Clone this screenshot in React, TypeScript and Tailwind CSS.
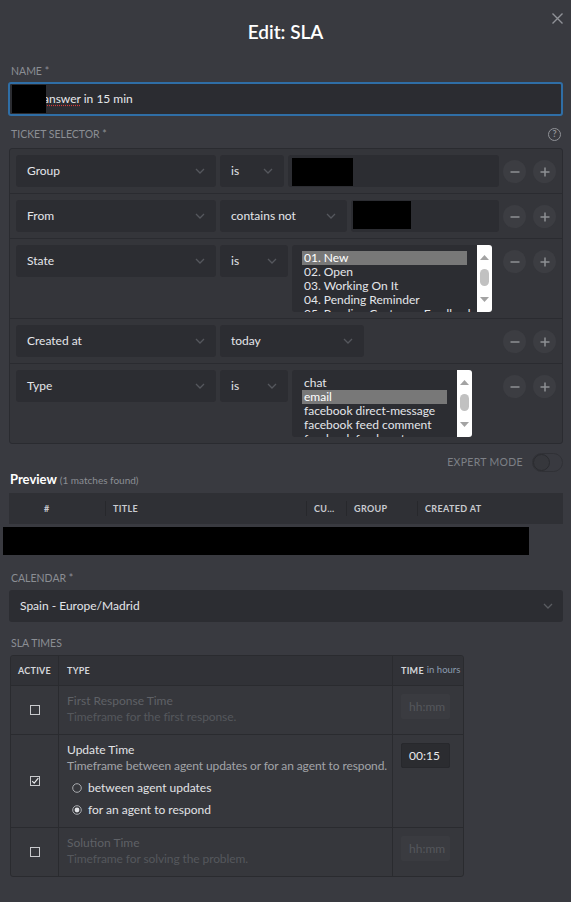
import React from "react";

const Chevron = ({ className = "" }: { className?: string }) => (
  <svg width="10" height="6" viewBox="0 0 10 6" className={className}>
    <path d="M1 1l4 4 4-4" fill="none" stroke="currentColor" strokeWidth="1.3" />
  </svg>
);

function Select({ label, w }: { label: string; w: string }) {
  return (
    <div
      className={`${w} h-8 shrink-0 rounded-[3px] bg-[#2c2d32] flex items-center justify-between px-[11px] text-[12px] text-[#e4e6ea]`}
    >
      <span>{label}</span>
      <Chevron className="text-[#55575d]" />
    </div>
  );
}

function RoundButton({ plus }: { plus?: boolean }) {
  return (
    <div className="w-[23px] h-[23px] rounded-full bg-[#3c3d42] flex items-center justify-center">
      <svg width="10" height="10" viewBox="0 0 10 10">
        <path d="M0.5 5h9" stroke="#8e9095" strokeWidth="1.5" />
        {plus && <path d="M5 0.5v9" stroke="#8e9095" strokeWidth="1.5" />}
      </svg>
    </div>
  );
}

function RowButtons() {
  return (
    <div className="ml-auto flex gap-[7px] pt-[5px]">
      <RoundButton />
      <RoundButton plus />
    </div>
  );
}

function Scrollbar() {
  return (
    <div className="w-[15px] h-full bg-white shrink-0 flex flex-col items-center pt-[10px]">
      <svg width="9" height="5" viewBox="0 0 9 5">
        <path d="M0 5L4.5 0L9 5z" fill="#a3a3a3" />
      </svg>
      <div className="mt-[9px] w-[9px] h-[17px] rounded-full bg-[#c1c1c1]" />
      <svg width="9" height="5" viewBox="0 0 9 5" className="mt-[11px]">
        <path d="M0 0L4.5 5L9 0z" fill="#a3a3a3" />
      </svg>
    </div>
  );
}

function ListBox({ items, selected, w }: { items: string[]; selected: string; w: string }) {
  return (
    <div className={`${w} h-[67px] shrink-0 bg-[#2c2d32] rounded-[3px] flex overflow-hidden`}>
      <div className="flex-1 px-[10px] pt-[6px] overflow-hidden">
        {items.map((item) => (
          <div
            key={item}
            className={`h-[14px] leading-[14px] text-[12px] px-[2px] whitespace-nowrap ${
              item === selected ? "bg-[#787878] text-white" : "text-[#e4e6ea]"
            }`}
          >
            {item}
          </div>
        ))}
      </div>
      <Scrollbar />
    </div>
  );
}

function SelectorRow({ children, last }: { children: React.ReactNode; last?: boolean }) {
  return (
    <div className={`flex items-start gap-[4px] px-[6px] py-[6px] ${last ? "" : "border-b border-[#2a2b30]"}`}>
      {children}
      <RowButtons />
    </div>
  );
}

function Label({ children }: { children: React.ReactNode }) {
  return (
    <div className="text-[10.5px] leading-[14px] uppercase text-[#8b8e94] pl-[3px]">
      {children}
    </div>
  );
}

function CheckBox({ checked }: { checked?: boolean }) {
  return (
    <svg width="10" height="10" viewBox="0 0 10 10">
      <rect x="0.5" y="0.5" width="9" height="9" fill="none" stroke="#c9cacd" />
      {checked && <path d="M2.2 5.2l2 2L8.3 2.2" fill="none" stroke="#e8e9eb" strokeWidth="1.2" />}
    </svg>
  );
}

function Radio({ on, label }: { on?: boolean; label: string }) {
  return (
    <div className="h-[22px] flex items-center gap-[6px] pl-[5px]">
      <svg width="10" height="10" viewBox="0 0 10 10">
        <circle cx="5" cy="5" r="4.3" fill="none" stroke="#a9abaf" />
        {on && <circle cx="5" cy="5" r="2.4" fill="#e2e3e6" />}
      </svg>
      <span className="text-[12px] text-[#e2e3e6]">{label}</span>
    </div>
  );
}

function TimeInput({ value }: { value?: string }) {
  return value ? (
    <div className="w-[49px] h-[25px] rounded-[2px] bg-[#2b2c30] border border-[#27282c] text-[12px] text-[#e8e9eb] pl-[7px] flex items-center">
      {value}
    </div>
  ) : (
    <div className="w-[49px] h-[25px] rounded-[2px] bg-[#3a3b40] text-[12px] text-[#55575c] pl-[8px] flex items-center">
      hh:mm
    </div>
  );
}

function SlaRow({
  title,
  desc,
  active,
  value,
  children,
  last,
}: {
  title: string;
  desc: string;
  active?: boolean;
  value?: string;
  children?: React.ReactNode;
  last?: boolean;
}) {
  return (
    <div className={`flex ${last ? "" : "border-b border-[#2a2b2f]"}`}>
      <div className="w-[48px] shrink-0 flex items-center justify-center border-r border-[#2a2b2f]">
        <CheckBox checked={active} />
      </div>
      <div className={`flex-1 min-w-0 pl-[8px] pt-[8px] ${children ? "pb-[6px]" : "pb-[9px]"}`}>
        <div className={`text-[12px] leading-[14px] ${active ? "text-[#e2e3e6]" : "text-[#5f6166]"}`}>{title}</div>
        <div
          className={`mt-[1px] text-[12px] leading-[16px] whitespace-nowrap tracking-[-0.1px] ${
            active ? "text-[#a2a4a8]" : "text-[#55575c]"
          }`}
        >
          {desc}
        </div>
        {children}
      </div>
      <div className="w-[71px] shrink-0 border-l border-[#2a2b2f] pl-[8px] pt-[8px] pb-[8px]">
        <TimeInput value={value} />
      </div>
    </div>
  );
}

export default function App() {
  return (
    <div className="min-h-[902px] bg-[#393a40] font-['Lato',sans-serif] text-[#e4e6ea] px-2 pb-6">
      <div className="relative h-16 flex items-center justify-center">
        <span className="text-[19px] font-semibold text-white">Edit: SLA</span>
        <svg width="11" height="11" viewBox="0 0 11 11" className="absolute right-[0px] top-[13px]">
          <path d="M0.5 0.5l10 10M10.5 0.5l-10 10" stroke="#909297" strokeWidth="1.4" />
        </svg>
      </div>

      <Label>Name *</Label>
      <div className="mt-[4px] h-[34px] rounded-[3px] border-2 border-[#2f6ea6] bg-[#2b2c31] flex items-center pl-[2px]">
        <div className="relative z-10 w-[34px] h-[28px] bg-black" />
        <span className="-ml-[3px] text-[12px] text-[#e8e9eb]">
          <span className="underline decoration-dotted decoration-[#d23c3c] underline-offset-2">answer</span> in 15 min
        </span>
      </div>

      <div className="mt-[11px] flex items-center justify-between">
        <Label>Ticket Selector *</Label>
        <div className="w-[13px] h-[13px] rounded-full border border-[#909297] flex items-center justify-center text-[9px] font-bold text-[#909297] mr-[2px]">
          ?
        </div>
      </div>

      <div className="mt-[7px] ml-px rounded-[3px] border border-[#2a2b30] bg-[#34353a]">
        <SelectorRow>
          <Select label="Group" w="w-[200px]" />
          <Select label="is" w="w-[64px]" />
          <div className="w-[211px] h-8 shrink-0 rounded-[3px] bg-[#2c2d32] pl-[4px] pt-[3px]">
            <div className="w-[61px] h-[28px] bg-black" />
          </div>
        </SelectorRow>
        <SelectorRow>
          <Select label="From" w="w-[200px]" />
          <Select label="contains not" w="w-[127px]" />
          <div className="w-[148px] h-8 shrink-0 rounded-[3px] bg-[#2c2d32] pl-[2px] pt-[1px]">
            <div className="w-[58px] h-[28px] bg-black" />
          </div>
        </SelectorRow>
        <SelectorRow>
          <Select label="State" w="w-[200px]" />
          <Select label="is" w="w-[68px]" />
          <ListBox
            w="w-[200px]"
            selected="01. New"
            items={[
              "01. New",
              "02. Open",
              "03. Working On It",
              "04. Pending Reminder",
              "05. Pending Customer Feedback",
            ]}
          />
        </SelectorRow>
        <SelectorRow>
          <Select label="Created at" w="w-[200px]" />
          <Select label="today" w="w-[144px]" />
        </SelectorRow>
        <SelectorRow last>
          <Select label="Type" w="w-[200px]" />
          <Select label="is" w="w-[68px]" />
          <ListBox
            w="w-[180px]"
            selected="email"
            items={["chat", "email", "facebook direct-message", "facebook feed comment", "facebook feed post"]}
          />
        </SelectorRow>
      </div>

      <div className="mt-[9px] h-[19px] flex items-center justify-end gap-[9px]">
        <span className="text-[10.5px] uppercase tracking-[0.03em] text-[#7d8086]">Expert Mode</span>
        <div className="w-[31px] h-[19px] rounded-full border border-[#303136] bg-[#393a40] flex items-center">
          <div className="w-[17px] h-[17px] rounded-full border border-[#2a2b2f] bg-[#36373c]" />
        </div>
      </div>

      <div className="-mt-px h-4 flex items-baseline gap-[3px] pl-[2px] leading-4">
        <span className="text-[13px] font-bold text-white">Preview</span>
        <span className="text-[10px] text-[#8b8e94]">(1 matches found)</span>
      </div>

      <div className="mt-[6px] ml-px h-[31px] bg-[#2f3035] flex items-center text-[9px] font-bold uppercase tracking-[0.04em] text-[#c9cbd0]">
        <div className="w-[96px] pl-[35px]">#</div>
        <div className="w-px h-[15px] bg-[#27282c]" />
        <div className="w-[200px] pl-[7px]">Title</div>
        <div className="w-px h-[15px] bg-[#27282c]" />
        <div className="w-[39px] pl-[7px]">Cu…</div>
        <div className="w-px h-[15px] bg-[#27282c]" />
        <div className="w-[70px] pl-[7px]">Group</div>
        <div className="w-px h-[15px] bg-[#27282c]" />
        <div className="flex-1 pl-[7px]">Created At</div>
      </div>
      <div className="mt-[3px] -ml-[5px] w-[526px] h-[28px] bg-black" />

      <div className="mt-[16px]">
        <Label>Calendar *</Label>
      </div>
      <div className="mt-[5px] ml-px h-8 rounded-[3px] bg-[#2c2d32] flex items-center justify-between pl-[11px] pr-[10px] text-[12px] text-[#e4e6ea]">
        <span>Spain - Europe/Madrid</span>
        <Chevron className="text-[#5a5c61]" />
      </div>

      <div className="mt-[14px]">
        <Label>SLA Times</Label>
      </div>
      <div className="mt-[5px] ml-[2px] w-[454px] rounded-[3px] border border-[#2a2b2f] bg-[#36373c] overflow-hidden">
        <div className="h-[30px] flex bg-[#313237] border-b border-[#2a2b2f] text-[9px] font-bold uppercase tracking-[0.03em] text-[#d4d6da]">
          <div className="w-[48px] shrink-0 flex items-center justify-center border-r border-[#2a2b2f]">Active</div>
          <div className="flex-1 flex items-center pl-[8px]">Type</div>
          <div className="w-[71px] shrink-0 flex items-center gap-[3px] pl-[8px] border-l border-[#2a2b2f] whitespace-nowrap">
            <span>Time</span>
            <span className="normal-case font-normal tracking-normal text-[9.5px] text-[#8c9db0]">in hours</span>
          </div>
        </div>
        <SlaRow title="First Response Time" desc="Timeframe for the first response." />
        <SlaRow
          active
          value="00:15"
          title="Update Time"
          desc="Timeframe between agent updates or for an agent to respond."
        >
          <div className="mt-[3px]">
            <Radio label="between agent updates" />
            <Radio on label="for an agent to respond" />
          </div>
        </SlaRow>
        <SlaRow last title="Solution Time" desc="Timeframe for solving the problem." />
      </div>
    </div>
  );
}
